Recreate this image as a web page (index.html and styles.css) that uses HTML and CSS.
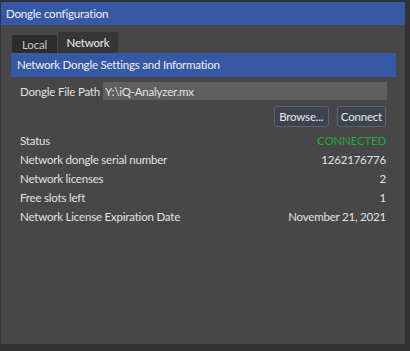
FILE: index.html
```html
<!DOCTYPE html>
<html lang="en">
  <head>
    <meta charset="UTF-8" />
    <title>Dongle configuration</title>
    <link rel="stylesheet" href="styles.css">
  </head>
  <body>
    <div class="window">
      <div class="titlebar">Dongle configuration</div>
      <div class="content">
        <div class="tabs">
          <div class="tab">Local</div>
          <div class="tab active">Network</div>
        </div>
        <div class="section-head">Network Dongle Settings and Information</div>

        <div class="path-row">
          <label for="path">Dongle File Path</label>
          <input type="text" id="path" value="Y:\iQ-Analyzer.mx" />
        </div>
        <div class="buttons">
          <button class="btn browse">Browse...</button>
          <button class="btn">Connect</button>
        </div>

        <div class="info">
          <div class="row"><span>Status</span><span class="ok">CONNECTED</span></div>
          <div class="row"><span>Network dongle serial number</span><span>1262176776</span></div>
          <div class="row"><span>Network licenses</span><span>2</span></div>
          <div class="row"><span>Free slots left</span><span>1</span></div>
          <div class="row"><span>Network License Expiration Date</span><span>November 21, 2021</span></div>
        </div>
      </div>
    </div>
  </body>
</html>
```

FILE: styles.css
```css
body {
  margin: 0;
  background: #323232;
  font-family: Lato, "Open Sans", sans-serif;
  font-size: 11.5px;
  letter-spacing: -0.2px;
  color: #e2e2e2;
}

.window {
  margin: 2px 5px 0 1px;
  width: 404px;
  height: 342px;
  background: #474747;
}

.titlebar {
  height: 23px;
  line-height: 23px;
  padding-left: 5px;
  background: #3759a5;
  color: #f0f0f0;
}

.content {
  padding: 0 9px 0 10px;
}

.tabs {
  display: flex;
  align-items: flex-end;
  margin-top: 7px;
  height: 21px;
  padding-left: 1px;
}

.tab {
  width: 45px;
  height: 18px;
  line-height: 19px;
  text-align: center;
  background: #2c2c2c;
  color: #c8c8c8;
  border-radius: 2px 2px 0 0;
}

.tab.active {
  width: 60px;
  height: 21px;
  line-height: 22px;
  margin-left: 1px;
  background: #363636;
  color: #f0f0f0;
}

.section-head {
  height: 24px;
  line-height: 24px;
  padding-left: 6px;
  background: #3759a5;
  color: #f0f0f0;
}

.path-row {
  display: flex;
  align-items: center;
  margin-top: 5px;
  padding: 0 9px 0 9px;
}

.path-row label {
  width: 83px;
  white-space: nowrap;
}

.path-row input {
  flex: 1;
  min-width: 0;
  height: 18px;
  padding: 0 2px;
  border: none;
  background: #5f5f5f;
  color: #e2e2e2;
  font-family: inherit;
  font-size: inherit;
  letter-spacing: inherit;
}

.buttons {
  display: flex;
  justify-content: flex-end;
  gap: 8px;
  margin-top: 6px;
  padding-right: 10px;
}

.btn {
  height: 21px;
  padding: 0 3px;
  background: #3d4250;
  border: 1px solid #5e6270;
  border-radius: 3px;
  color: #e8e8e8;
  font-family: inherit;
  font-size: inherit;
  letter-spacing: inherit;
}

.btn.browse {
  width: 55px;
}

.info {
  margin-top: 4px;
  padding: 0 10px 0 9px;
}

.row {
  display: flex;
  justify-content: space-between;
  height: 19px;
  line-height: 19px;
}

.ok {
  color: #1fa83a;
}
```
